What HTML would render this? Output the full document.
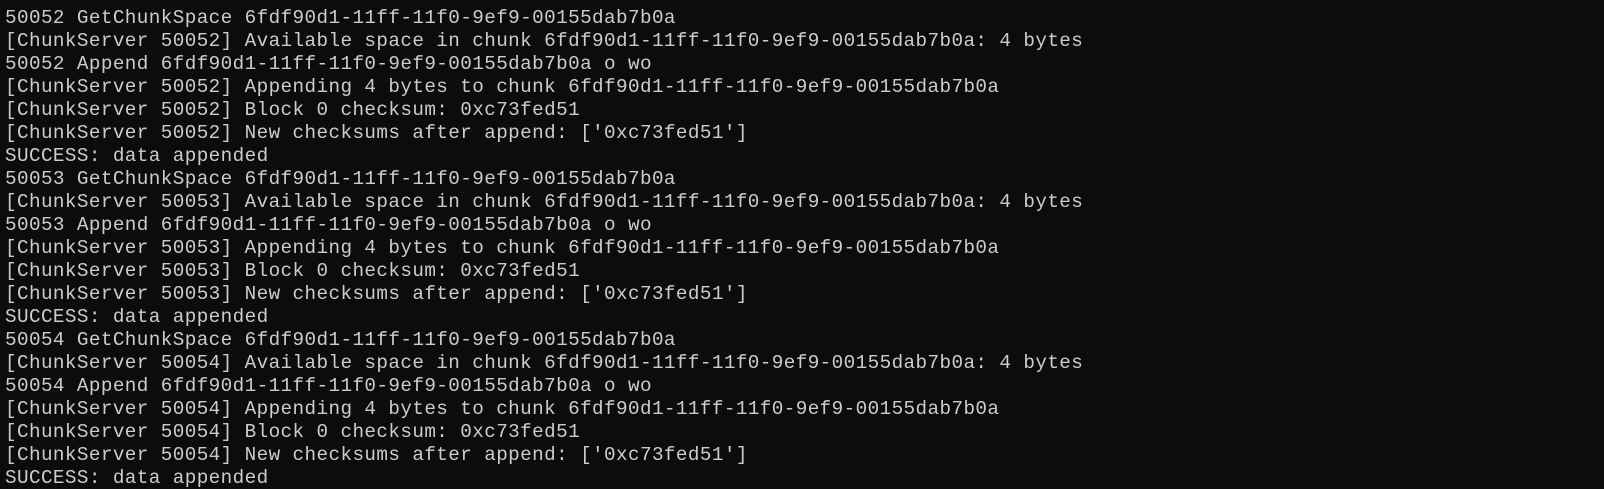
<!DOCTYPE html>
<html><head><meta charset="utf-8"><style>
html,body{margin:0;padding:0;background:#0c0c0c;width:1604px;height:489px;overflow:hidden;position:relative}
div{position:absolute;left:5px;height:22px;font-family:"Liberation Mono",monospace;font-size:19.3px;line-height:22px;letter-spacing:0.41px;color:#cccccc;white-space:pre}
</style></head><body>
<div style="top:7px">50052 GetChunkSpace 6fdf90d1-11ff-11f0-9ef9-00155dab7b0a</div>
<div style="top:30px">[ChunkServer 50052] Available space in chunk 6fdf90d1-11ff-11f0-9ef9-00155dab7b0a: 4 bytes</div>
<div style="top:53px">50052 Append 6fdf90d1-11ff-11f0-9ef9-00155dab7b0a o wo</div>
<div style="top:76px">[ChunkServer 50052] Appending 4 bytes to chunk 6fdf90d1-11ff-11f0-9ef9-00155dab7b0a</div>
<div style="top:99px">[ChunkServer 50052] Block 0 checksum: 0xc73fed51</div>
<div style="top:122px">[ChunkServer 50052] New checksums after append: ['0xc73fed51']</div>
<div style="top:145px">SUCCESS: data appended</div>
<div style="top:168px">50053 GetChunkSpace 6fdf90d1-11ff-11f0-9ef9-00155dab7b0a</div>
<div style="top:191px">[ChunkServer 50053] Available space in chunk 6fdf90d1-11ff-11f0-9ef9-00155dab7b0a: 4 bytes</div>
<div style="top:214px">50053 Append 6fdf90d1-11ff-11f0-9ef9-00155dab7b0a o wo</div>
<div style="top:237px">[ChunkServer 50053] Appending 4 bytes to chunk 6fdf90d1-11ff-11f0-9ef9-00155dab7b0a</div>
<div style="top:260px">[ChunkServer 50053] Block 0 checksum: 0xc73fed51</div>
<div style="top:283px">[ChunkServer 50053] New checksums after append: ['0xc73fed51']</div>
<div style="top:306px">SUCCESS: data appended</div>
<div style="top:329px">50054 GetChunkSpace 6fdf90d1-11ff-11f0-9ef9-00155dab7b0a</div>
<div style="top:352px">[ChunkServer 50054] Available space in chunk 6fdf90d1-11ff-11f0-9ef9-00155dab7b0a: 4 bytes</div>
<div style="top:375px">50054 Append 6fdf90d1-11ff-11f0-9ef9-00155dab7b0a o wo</div>
<div style="top:398px">[ChunkServer 50054] Appending 4 bytes to chunk 6fdf90d1-11ff-11f0-9ef9-00155dab7b0a</div>
<div style="top:421px">[ChunkServer 50054] Block 0 checksum: 0xc73fed51</div>
<div style="top:444px">[ChunkServer 50054] New checksums after append: ['0xc73fed51']</div>
<div style="top:467px">SUCCESS: data appended</div>
</body></html>
